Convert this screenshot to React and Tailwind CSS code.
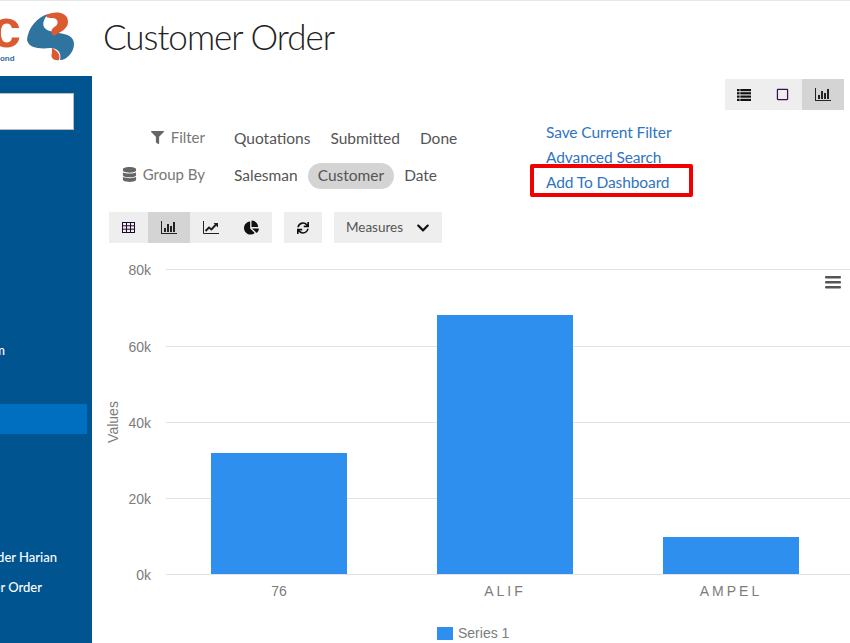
import { FaFilter, FaDatabase, FaChartPie, FaSync, FaChevronDown, FaRegSquare } from 'react-icons/fa'

const FONT = 'font-["Lato",sans-serif]'

function Logo() {
  return (
    <svg width="80" height="62" viewBox="0 0 80 62">
      <text x="-9" y="47" fontFamily="Liberation Sans, sans-serif" fontWeight="700" fontSize="54" fill="#dc5a30">c</text>
      <text x="-5" y="61" fontFamily="Liberation Sans, sans-serif" fontWeight="700" fontSize="8" fill="#2f6f9f">bond</text>
      <path d="M27 40 C28 28 37 17 48 14 C43 20 40 28 50 31 C60 34 74 33 74 44 C74 52 67 60 60 60 C62 52 57 48 50 48 C42 49 29 49 27 40 Z" fill="#2f739f" />
      <path d="M46 15 C54 11 68 11 68 22 C68 29 60 32 54 36 C49 32 52 28 56 26 C59 23 58 18 52 18 C49 18 46 18 46 15 Z" fill="#dc5a30" />
      <path d="M52 48 C56 50 61 54 59 60 C54 61 50 58 52 53 Z" fill="#dc5a30" />
    </svg>
  )
}

function ListIcon() {
  return (
    <svg width="14" height="12" viewBox="0 0 14 12" fill="#111">
      <rect y="0" width="14" height="2.2" /><rect y="3.2" width="14" height="2.2" /><rect y="6.5" width="14" height="2.2" /><rect y="9.8" width="14" height="2.2" />
      <rect x="2.6" y="0" width="0.7" height="12" fill="#eee" />
    </svg>
  )
}

function BarIcon() {
  return (
    <svg width="16" height="13" viewBox="0 0 16 13" fill="#222">
      <rect x="0" y="0" width="1" height="13" /><rect x="0" y="12" width="16" height="1" />
      <rect x="3" y="7" width="2" height="4" /><rect x="6" y="3" width="2" height="8" /><rect x="9" y="5" width="2" height="6" /><rect x="12" y="1" width="2" height="10" />
    </svg>
  )
}

function LineIcon() {
  return (
    <svg width="16" height="13" viewBox="0 0 16 13">
      <path d="M0.5 0v12.5H16" fill="none" stroke="#222" />
      <path d="M2.5 10 L6 6.5 L8.5 8.5 L13 3.5" fill="none" stroke="#222" strokeWidth="2" />
      <path d="M10.5 2 H15 V6.5 Z" fill="#222" />
    </svg>
  )
}

function TableIcon() {
  return (
    <svg width="13" height="11" viewBox="0 0 13 11" fill="none" stroke="#22062b">
      <rect x="0.5" y="0.5" width="12" height="10" />
      <path d="M0 3.8H13M0 7.2H13M4.5 0V11M8.5 0V11" />
    </svg>
  )
}

function Chip({ children, active }) {
  return (
    <span className={`px-[10px] py-[1px] rounded-full text-[15.5px] text-[#555] ${active ? 'bg-[#d4d4d4]' : ''}`}>{children}</span>
  )
}

function ToolButton({ children, active, className = '' }) {
  return (
    <button className={`flex items-center justify-center h-full ${active ? 'bg-[#d4d4d4]' : ''} ${className}`}>{children}</button>
  )
}

function Chart() {
  const ticks = [
    { label: '80k', y: 269 },
    { label: '60k', y: 346 },
    { label: '40k', y: 422 },
    { label: '20k', y: 498 },
    { label: '0k', y: 574 },
  ]
  const bars = [
    { label: '76', x: 211, top: 453, spacing: 0 },
    { label: 'ALIF', x: 437, top: 315, spacing: 3 },
    { label: 'AMPEL', x: 663, top: 537, spacing: 3 },
  ]
  return (
    <svg width="758" height="393" viewBox="92 250 758 393" className="block mt-[7px]" fontFamily="Liberation Sans, sans-serif">
      {ticks.map((t) => (
        <g key={t.label}>
          <line x1="166" x2="850" y1={t.y + 0.5} y2={t.y + 0.5} stroke="#e3e3e3" />
          <text x="151" y={t.y + 6} textAnchor="end" fontSize="14" fill="#7c7c7c">{t.label}</text>
        </g>
      ))}
      {bars.map((b) => (
        <g key={b.label}>
          <rect x={b.x} y={b.top} width="136" height={574 - b.top} fill="#2f8fef" />
          <text x={b.x + 68} y="596" textAnchor="middle" fontSize="14" letterSpacing={b.spacing} fill="#7c7c7c">{b.label}</text>
        </g>
      ))}
      <text transform="translate(118 422) rotate(-90)" textAnchor="middle" fontSize="14" fill="#7c7c7c">Values</text>
      <rect x="437" y="627" width="16" height="13" fill="#2f8fef" />
      <text x="458" y="638" fontSize="14" fill="#7c7c7c">Series 1</text>
      <rect x="825" y="276" width="16" height="2.6" rx="1" fill="#555" />
      <rect x="825" y="281" width="16" height="2.6" rx="1" fill="#555" />
      <rect x="825" y="286" width="16" height="2.6" rx="1" fill="#555" />
    </svg>
  )
}

export default function App() {
  return (
    <div className={`h-[643px] w-[850px] overflow-hidden bg-white border-t border-[#e8e8e8] flex flex-col ${FONT}`}>
      <header className="h-[75px] flex items-center shrink-0">
        <div className="w-[103px] shrink-0 self-start -mt-px">
          <Logo />
        </div>
        <h1 className="text-[35px] font-light tracking-[-1px] text-[#222] -mt-[4px]">Customer Order</h1>
      </header>

      <div className="flex flex-1 min-h-0">
        <aside className="w-[92px] shrink-0 bg-[#005590] text-white text-[13px] font-medium">
          <div className="w-[74px] h-[37px] mt-[17px] bg-white border border-[#bbb] border-l-0" />
          <div className="flex justify-end pr-[87px] mt-[210px] leading-[20px]">
            <span className="whitespace-nowrap">Sistem</span>
          </div>
          <div className="w-[87px] h-[30px] mt-[44px] bg-[#006fc0]" />
          <div className="flex justify-end pr-[35px] mt-[113px] leading-[20px]">
            <span className="whitespace-nowrap">Order Harian</span>
          </div>
          <div className="flex justify-end pr-[50px] mt-[10px] leading-[20px]">
            <span className="whitespace-nowrap">Customer Order</span>
          </div>
        </aside>

        <main className="flex-1 min-w-0">
          <div className="flex justify-end pt-[3px] pr-[6px]">
            <div className="flex h-[31px] w-[119px] bg-[#eeeeee]">
              <ToolButton className="flex-1"><ListIcon /></ToolButton>
              <ToolButton className="flex-1"><FaRegSquare size={13} color="#3b1050" /></ToolButton>
              <ToolButton active className="w-[42px]"><BarIcon /></ToolButton>
            </div>
          </div>

          <div className="flex mt-[12px]">
            <div className="w-[438px]">
              <div className="flex items-center h-[26px] mt-[3px]">
                <div className="w-[113px] pb-[2px] flex items-center justify-end gap-[7px] text-[15px] text-[#777]">
                  <FaFilter size={13} color="#666" />
                  <span>Filter</span>
                </div>
                <div className="flex ml-[19px] pt-[2px]">
                  <Chip>Quotations</Chip>
                  <Chip>Submitted</Chip>
                  <Chip>Done</Chip>
                </div>
              </div>
              <div className="flex items-center h-[26px] mt-[11px]">
                <div className="w-[113px] pb-[2px] flex items-center justify-end gap-[6px] text-[15px] text-[#777]">
                  <FaDatabase size={15} color="#666" />
                  <span>Group By</span>
                </div>
                <div className="flex ml-[19px] pt-[2px]">
                  <Chip>Salesman</Chip>
                  <Chip active>Customer</Chip>
                  <Chip>Date</Chip>
                </div>
              </div>
            </div>
            <div className="relative flex flex-col text-[15.5px] tracking-[-0.1px] text-[#2f74c0] leading-[25px] -mt-[2px] ml-[16px]">
              <a>Save Current Filter</a>
              <a>Advanced Search</a>
              <a>Add To Dashboard</a>
              <div className="absolute -left-[16px] top-[44px] w-[163px] h-[33px] border-[4px] border-[#f00000] rounded-[2px]" />
            </div>
          </div>

          <div className="flex h-[31px] mt-[17px] ml-[17px] text-[13.5px] text-[#555]">
            <div className="flex bg-[#eeeeee]">
              <ToolButton className="w-[39px]"><TableIcon /></ToolButton>
              <ToolButton active className="w-[42px]"><BarIcon /></ToolButton>
              <ToolButton className="w-[41px]"><LineIcon /></ToolButton>
              <ToolButton className="w-[41px]"><FaChartPie size={15} color="#111" /></ToolButton>
            </div>
            <ToolButton className="w-[38px] ml-[12px] !bg-[#eeeeee]"><FaSync size={12} color="#111" /></ToolButton>
            <ToolButton className="w-[108px] ml-[12px] gap-[13px] !bg-[#eeeeee]">
              Measures <FaChevronDown size={14} color="#111" />
            </ToolButton>
          </div>

          <Chart />
        </main>
      </div>
    </div>
  )
}
